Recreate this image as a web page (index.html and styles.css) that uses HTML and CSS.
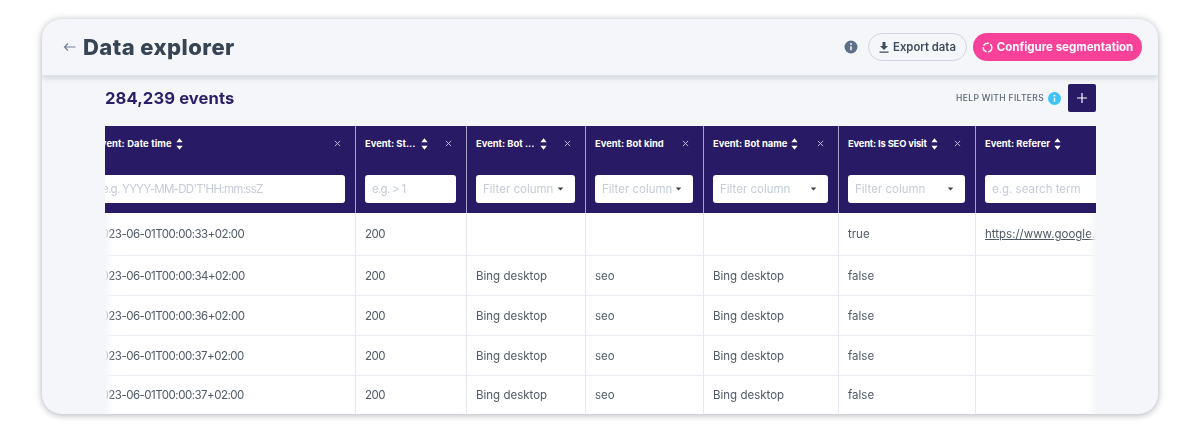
FILE: index.html
```html
<!DOCTYPE html>
<html lang="en">
<head>
<meta charset="utf-8">
<title>Data explorer</title>
<link rel="stylesheet" href="styles.css">
</head>
<body>
<svg class="defs" width="0" height="0" aria-hidden="true">
  <symbol id="sort" viewBox="0 0 8 14"><path d="M4 .5 7.6 5H.4zM4 13.500.4 9h7.200z" fill="currentColor"/></symbol>
  <symbol id="x" viewBox="0 0 8 8"><path d="M1 1l6 6M7 1 1 7" stroke="currentColor" stroke-width="1" fill="none"/></symbol>
  <symbol id="caret" viewBox="0 0 8 5"><path d="M.5.5h7L4 4.500z" fill="currentColor"/></symbol>
</svg>
<main class="card">
  <header class="topbar">
    <div class="title-group">
      <svg class="back" width="13" height="10" viewBox="0 0 13 10"><path d="M12.500 5H1.500M5 1.500 1.500 5 5 8.500" stroke="currentColor" stroke-width="1.200" fill="none"/></svg>
      <h1>Data explorer</h1>
    </div>
    <div class="actions">
      <svg class="info" width="14" height="14" viewBox="0 0 14 14"><circle cx="7" cy="7" r="6.500" fill="#5d7089"/><path d="M7 6.200v4" stroke="#fff" stroke-width="1.500"/><circle cx="7" cy="4" r=".9" fill="#fff"/></svg>
      <button class="btn btn-outline">
        <svg width="10" height="11" viewBox="0 0 10 11"><path d="M3.500 0h3v4H9L5 8 1 4h2.500zM.5 9.500h9v1.200h-9z" fill="currentColor"/></svg>
        Export data
      </button>
      <button class="btn btn-pink">
        <svg width="11" height="11" viewBox="0 0 11 11"><circle cx="5.500" cy="5.500" r="4.300" stroke="#fff" stroke-width="1.400" fill="none" stroke-dasharray="6 1.500"/></svg>
        Configure segmentation
      </button>
    </div>
  </header>
  <section class="content">
    <div class="toolbar">
      <h2>284,239 events</h2>
      <div class="help">
        <span>HELP WITH FILTERS</span>
        <svg width="13" height="13" viewBox="0 0 14 14"><circle cx="7" cy="7" r="7" fill="#3cc4f5"/><path d="M7 6.200v4.300" stroke="#fff" stroke-width="1.600"/><circle cx="7" cy="3.900" r="1" fill="#fff"/></svg>
        <button class="add" aria-label="Add"><svg width="10" height="10" viewBox="0 0 10 10"><path d="M5 0v10M0 5h10" stroke="#fff" stroke-width="1.200"/></svg></button>
      </div>
    </div>
    <div class="table-wrap">
      <table>
        <colgroup><col class="c1"><col class="c2"><col class="c3"><col class="c4"><col class="c5"><col class="c6"><col class="c7"></colgroup>
        <thead>
          <tr class="head-row">
            <th><div class="th-in loose"><span>Event: Date time</span><svg class="s"><use href="#sort"/></svg><svg class="x"><use href="#x"/></svg></div></th>
            <th><div class="th-in"><span>Event: St...</span><svg class="s wide"><use href="#sort"/></svg><svg class="x"><use href="#x"/></svg></div></th>
            <th><div class="th-in"><span>Event: Bot ...</span><svg class="s wide"><use href="#sort"/></svg><svg class="x"><use href="#x"/></svg></div></th>
            <th><div class="th-in"><span>Event: Bot kind</span><svg class="x"><use href="#x"/></svg></div></th>
            <th><div class="th-in"><span>Event: Bot name</span><svg class="s"><use href="#sort"/></svg><svg class="x"><use href="#x"/></svg></div></th>
            <th><div class="th-in snug"><span>Event: Is SEO visit</span><svg class="s"><use href="#sort"/></svg><svg class="x"><use href="#x"/></svg></div></th>
            <th><div class="th-in"><span>Event: Referer</span><svg class="s"><use href="#sort"/></svg></div></th>
          </tr>
          <tr class="filter-row">
            <th><div class="field tight">e.g. YYYY-MM-DD'T'HH:mm:ssZ</div></th>
            <th><div class="field tight">e.g. &gt; 1</div></th>
            <th><div class="field">Filter column<svg class="caret"><use href="#caret"/></svg></div></th>
            <th><div class="field">Filter column<svg class="caret"><use href="#caret"/></svg></div></th>
            <th><div class="field">Filter column<svg class="caret"><use href="#caret"/></svg></div></th>
            <th><div class="field">Filter column<svg class="caret"><use href="#caret"/></svg></div></th>
            <th><div class="field">e.g. search term</div></th>
          </tr>
        </thead>
        <tbody>
          <tr class="first"><td class="num">2023-06-01T00:00:33+02:00</td><td class="num">200</td><td></td><td></td><td></td><td>true</td><td><a href="#">https://www.google.com/</a></td></tr>
          <tr><td class="num">2023-06-01T00:00:34+02:00</td><td class="num">200</td><td>Bing desktop</td><td>seo</td><td>Bing desktop</td><td>false</td><td></td></tr>
          <tr><td class="num">2023-06-01T00:00:36+02:00</td><td class="num">200</td><td>Bing desktop</td><td>seo</td><td>Bing desktop</td><td>false</td><td></td></tr>
          <tr><td class="num">2023-06-01T00:00:37+02:00</td><td class="num">200</td><td>Bing desktop</td><td>seo</td><td>Bing desktop</td><td>false</td><td></td></tr>
          <tr class="last"><td class="num">2023-06-01T00:00:37+02:00</td><td class="num">200</td><td>Bing desktop</td><td>seo</td><td>Bing desktop</td><td>false</td><td></td></tr>
        </tbody>
      </table>
    </div>
  </section>
</main>
</body>
</html>
```
FILE: styles.css
```css
* { box-sizing: border-box; }
html, body { margin: 0; height: 433px; overflow: hidden; background: #fff; }
body { padding: 19px 42px 0; font-family: Inter, "Liberation Sans", sans-serif; }
.defs { display: block; height: 0; }
.card {
  width: 1116px; height: 395px; background: #f5f6f9; border-radius: 20px; overflow: hidden;
  box-shadow: 0 1px 7px rgba(40, 45, 60, .38); filter: blur(.4px);
}
.topbar {
  height: 57px; display: flex; align-items: center; justify-content: space-between;
  padding: 0 16px 0 21px; background: #f5f6f9; border-bottom: 1px solid #dfe3e9;
  box-shadow: 0 2px 6px rgba(70, 85, 105, .22); position: relative;
}
.title-group { display: flex; align-items: center; gap: 7px; }
.back { color: #6f8198; }
h1 { margin: 0; font-size: 22px; font-weight: 800; color: #364454; letter-spacing: .45px; }
.actions { display: flex; align-items: center; gap: 6px; }
.info { margin-right: 4px; }
.btn {
  height: 28px; border-radius: 14px; display: flex; align-items: center; gap: 4px;
  font: 600 11.300px Inter, sans-serif; white-space: nowrap; padding: 0;
}
.btn-outline { width: 99px; justify-content: center; background: #f5f6f9; color: #3e4c5d; border: 1px solid #cfd6e1; }
.btn-pink { width: 169px; justify-content: center; background: #f8429a; color: #fff; border: 0; font-size: 11.500px; font-weight: 700; }
.content { padding: 0 62px 0 63px; }
.toolbar { height: 50px; display: flex; align-items: center; justify-content: space-between; padding-bottom: 6px; }
h2 { margin: 0; font-size: 16.600px; font-weight: 700; color: #2c1e69; letter-spacing: .1px; }
.help { display: flex; align-items: center; gap: 4px; font-size: 8.500px; font-weight: 500; letter-spacing: .35px; color: #5b6675; }
.add {
  width: 28px; height: 28px; margin-left: 3px; padding: 0; display: flex; align-items: center; justify-content: center;
  background: #281a64; border: 0; border-radius: 2px;
}
.table-wrap { position: relative; width: 991px; height: 288px; overflow: hidden; background: #fff; }
.table-wrap::before, .table-wrap::after {
  content: ""; position: absolute; top: 87px; bottom: 0; width: 8px; z-index: 1;
}
.table-wrap::before { left: 0; background: linear-gradient(90deg, #f5f6f9, rgba(255,255,255,0)); }
.table-wrap::after { right: 0; background: linear-gradient(270deg, #f5f6f9, rgba(255,255,255,0)); }
table { table-layout: fixed; width: 1090px; margin-left: -19px; border-collapse: separate; border-spacing: 0; }
.c1 { width: 270px; } .c2 { width: 111px; } .c3 { width: 119px; } .c4 { width: 118px; }
.c5 { width: 135px; } .c6 { width: 137px; } .c7 { width: 200px; }
th { background: #281a64; padding: 0 10px 0 9px; border-right: 1px solid #a9a4c8; text-align: left; font-weight: 600; }
.head-row th { height: 37px; vertical-align: top; padding-top: 10px; }
.filter-row th { height: 50px; vertical-align: top; padding-top: 12px; }
.th-in { display: flex; align-items: center; color: #fff; font-size: 9.400px; font-weight: 700; height: 15px; white-space: nowrap; }
.th-in.loose { letter-spacing: .12px; }
.th-in.snug { letter-spacing: -.18px; }
.th-in .s { width: 7px; height: 14px; margin-left: 4px; color: #fff; flex: none; }
.th-in .s.wide { margin-left: 6px; }
.th-in .x { width: 7px; height: 7px; margin-left: auto; margin-right: 4px; color: #cfcde0; flex: none; }
.field {
  height: 28px; background: #fff; border-radius: 3px; display: flex; align-items: center; justify-content: space-between;
  padding: 0 11px 0 7px; color: #c5cbd8; font-size: 11.500px; font-weight: 400; white-space: nowrap; overflow: hidden;
}
.field.tight { letter-spacing: -.7px; }
.caret { width: 7px; height: 4px; color: #3d3d4d; flex: none; }
td {
  height: 40px; padding: 0 10px 0 9px; font-size: 11.500px; color: #505966; white-space: nowrap; overflow: hidden;
  border-right: 1px solid #e6e9f1; border-bottom: 1px solid #e9edf3; background: #fff;
}
td.num { letter-spacing: -.5px; }
tr.first td { height: 43px; }
tr.last td { border-bottom: 0; height: 38px; }
td a { color: #505966; }
```
